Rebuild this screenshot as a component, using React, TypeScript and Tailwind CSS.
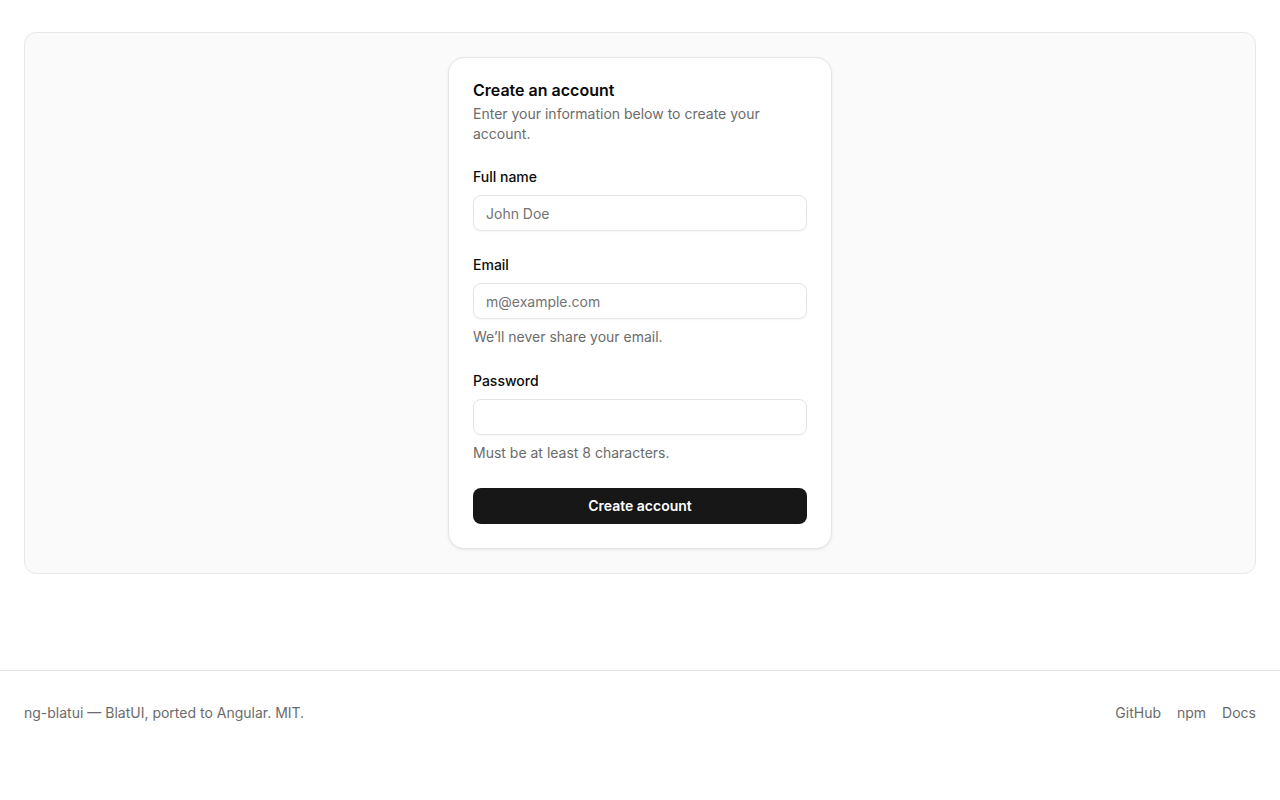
const font = { fontFamily: 'Inter, "Noto Sans", sans-serif' }

function Field({ label, placeholder, type = 'text', hint }: { label: string; placeholder?: string; type?: string; hint?: string }) {
  return (
    <div className="flex flex-col">
      <label className="text-sm leading-5 font-medium text-[#0a0a0a]">{label}</label>
      <input
        type={type}
        placeholder={placeholder}
        className="mt-2 h-9 w-full rounded-lg border border-[#e5e5e5] bg-white px-3 text-sm text-[#0a0a0a] placeholder:text-[#737373] shadow-[0_1px_2px_rgba(0,0,0,0.04)] outline-none"
      />
      {hint && <p className="mt-2 text-sm leading-5 text-[#6b6b6b]">{hint}</p>}
    </div>
  )
}

export default function App() {
  return (
    <div className="min-h-screen bg-white" style={font}>
      <main className="px-6 pt-8 pb-24">
        <div className="flex justify-center rounded-xl border border-[#e8e8e8] bg-[#fafafa] p-6">
          <div className="w-96 rounded-2xl border border-[#e5e5e5] bg-white p-6 shadow-[0_1px_3px_rgba(0,0,0,0.08)]">
            <h2 className="text-base leading-4 font-semibold text-[#0a0a0a]">Create an account</h2>
            <p className="mt-[6px] text-sm leading-5 text-[#6b6b6b]">Enter your information below to create your account.</p>
            <form className="mt-[23px] flex flex-col gap-6" onSubmit={(e) => e.preventDefault()}>
              <Field label="Full name" placeholder="John Doe" />
              <Field label="Email" placeholder="m@example.com" type="email" hint="We’ll never share your email." />
              <Field label="Password" type="password" hint="Must be at least 8 characters." />
              <button className="mt-px h-9 w-full rounded-lg bg-[#171717] text-sm font-semibold text-white">Create account</button>
            </form>
          </div>
        </div>
      </main>
      <footer className="border-t border-[#e5e5e5]">
        <div className="flex items-center justify-between px-6 py-8 text-sm leading-5 text-[#6b6b6b]">
          <p>ng-blatui — BlatUI, ported to Angular. MIT.</p>
          <nav className="flex gap-4">
            <a href="#">GitHub</a>
            <a href="#">npm</a>
            <a href="#">Docs</a>
          </nav>
        </div>
      </footer>
    </div>
  )
}
